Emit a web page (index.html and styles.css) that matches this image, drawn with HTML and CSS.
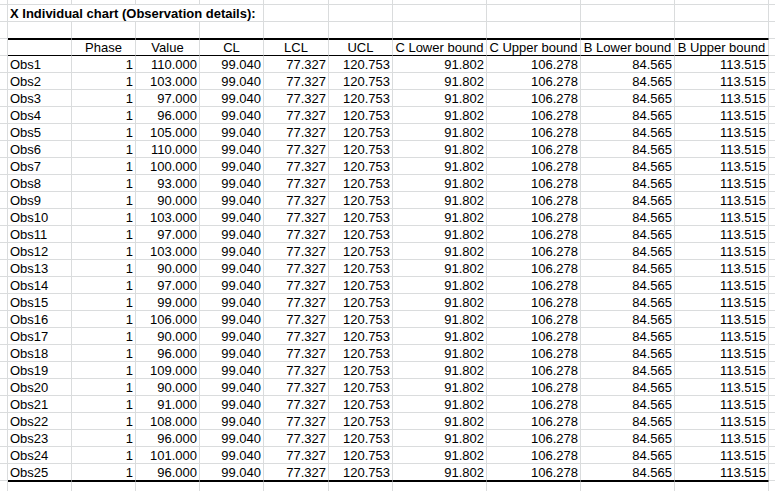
FILE: index.html
```html
<!DOCTYPE html>
<html>
<head>
<meta charset="utf-8">
<link rel="stylesheet" href="styles.css">
</head>
<body>
<div class="sheet">
  <div class="row top"><div class="c"></div><div class="c"></div><div class="c"></div><div class="c"></div><div class="c"></div><div class="c"></div><div class="c"></div><div class="c"></div><div class="c"></div><div class="c"></div><div class="c"></div><div class="c last"></div></div>
  <div class="row"><div class="c"></div><div class="c title">X Individual chart (Observation details):</div><div class="c"></div><div class="c"></div><div class="c"></div><div class="c"></div><div class="c"></div><div class="c"></div><div class="c last"></div></div>
  <div class="row gap"><div class="c"></div><div class="c k"></div><div class="c k"></div><div class="c k"></div><div class="c k"></div><div class="c k"></div><div class="c k"></div><div class="c k"></div><div class="c k"></div><div class="c k"></div><div class="c k"></div><div class="c last"></div></div>
  <div class="row head"><div class="c"></div><div class="c h"></div><div class="c h">Phase</div><div class="c h">Value</div><div class="c h">CL</div><div class="c h">LCL</div><div class="c h">UCL</div><div class="c h">C Lower bound</div><div class="c h">C Upper bound</div><div class="c h">B Lower bound</div><div class="c h">B Upper bound</div><div class="c last"></div></div>
  <div class="row"><div class="c"></div><div class="c lbl">Obs1</div><div class="c n">1</div><div class="c n">110.000</div><div class="c n">99.040</div><div class="c n">77.327</div><div class="c n">120.753</div><div class="c n">91.802</div><div class="c n">106.278</div><div class="c n">84.565</div><div class="c n">113.515</div><div class="c last"></div></div>
  <div class="row"><div class="c"></div><div class="c lbl">Obs2</div><div class="c n">1</div><div class="c n">103.000</div><div class="c n">99.040</div><div class="c n">77.327</div><div class="c n">120.753</div><div class="c n">91.802</div><div class="c n">106.278</div><div class="c n">84.565</div><div class="c n">113.515</div><div class="c last"></div></div>
  <div class="row"><div class="c"></div><div class="c lbl">Obs3</div><div class="c n">1</div><div class="c n">97.000</div><div class="c n">99.040</div><div class="c n">77.327</div><div class="c n">120.753</div><div class="c n">91.802</div><div class="c n">106.278</div><div class="c n">84.565</div><div class="c n">113.515</div><div class="c last"></div></div>
  <div class="row"><div class="c"></div><div class="c lbl">Obs4</div><div class="c n">1</div><div class="c n">96.000</div><div class="c n">99.040</div><div class="c n">77.327</div><div class="c n">120.753</div><div class="c n">91.802</div><div class="c n">106.278</div><div class="c n">84.565</div><div class="c n">113.515</div><div class="c last"></div></div>
  <div class="row"><div class="c"></div><div class="c lbl">Obs5</div><div class="c n">1</div><div class="c n">105.000</div><div class="c n">99.040</div><div class="c n">77.327</div><div class="c n">120.753</div><div class="c n">91.802</div><div class="c n">106.278</div><div class="c n">84.565</div><div class="c n">113.515</div><div class="c last"></div></div>
  <div class="row"><div class="c"></div><div class="c lbl">Obs6</div><div class="c n">1</div><div class="c n">110.000</div><div class="c n">99.040</div><div class="c n">77.327</div><div class="c n">120.753</div><div class="c n">91.802</div><div class="c n">106.278</div><div class="c n">84.565</div><div class="c n">113.515</div><div class="c last"></div></div>
  <div class="row"><div class="c"></div><div class="c lbl">Obs7</div><div class="c n">1</div><div class="c n">100.000</div><div class="c n">99.040</div><div class="c n">77.327</div><div class="c n">120.753</div><div class="c n">91.802</div><div class="c n">106.278</div><div class="c n">84.565</div><div class="c n">113.515</div><div class="c last"></div></div>
  <div class="row"><div class="c"></div><div class="c lbl">Obs8</div><div class="c n">1</div><div class="c n">93.000</div><div class="c n">99.040</div><div class="c n">77.327</div><div class="c n">120.753</div><div class="c n">91.802</div><div class="c n">106.278</div><div class="c n">84.565</div><div class="c n">113.515</div><div class="c last"></div></div>
  <div class="row"><div class="c"></div><div class="c lbl">Obs9</div><div class="c n">1</div><div class="c n">90.000</div><div class="c n">99.040</div><div class="c n">77.327</div><div class="c n">120.753</div><div class="c n">91.802</div><div class="c n">106.278</div><div class="c n">84.565</div><div class="c n">113.515</div><div class="c last"></div></div>
  <div class="row"><div class="c"></div><div class="c lbl">Obs10</div><div class="c n">1</div><div class="c n">103.000</div><div class="c n">99.040</div><div class="c n">77.327</div><div class="c n">120.753</div><div class="c n">91.802</div><div class="c n">106.278</div><div class="c n">84.565</div><div class="c n">113.515</div><div class="c last"></div></div>
  <div class="row"><div class="c"></div><div class="c lbl">Obs11</div><div class="c n">1</div><div class="c n">97.000</div><div class="c n">99.040</div><div class="c n">77.327</div><div class="c n">120.753</div><div class="c n">91.802</div><div class="c n">106.278</div><div class="c n">84.565</div><div class="c n">113.515</div><div class="c last"></div></div>
  <div class="row"><div class="c"></div><div class="c lbl">Obs12</div><div class="c n">1</div><div class="c n">103.000</div><div class="c n">99.040</div><div class="c n">77.327</div><div class="c n">120.753</div><div class="c n">91.802</div><div class="c n">106.278</div><div class="c n">84.565</div><div class="c n">113.515</div><div class="c last"></div></div>
  <div class="row"><div class="c"></div><div class="c lbl">Obs13</div><div class="c n">1</div><div class="c n">90.000</div><div class="c n">99.040</div><div class="c n">77.327</div><div class="c n">120.753</div><div class="c n">91.802</div><div class="c n">106.278</div><div class="c n">84.565</div><div class="c n">113.515</div><div class="c last"></div></div>
  <div class="row"><div class="c"></div><div class="c lbl">Obs14</div><div class="c n">1</div><div class="c n">97.000</div><div class="c n">99.040</div><div class="c n">77.327</div><div class="c n">120.753</div><div class="c n">91.802</div><div class="c n">106.278</div><div class="c n">84.565</div><div class="c n">113.515</div><div class="c last"></div></div>
  <div class="row"><div class="c"></div><div class="c lbl">Obs15</div><div class="c n">1</div><div class="c n">99.000</div><div class="c n">99.040</div><div class="c n">77.327</div><div class="c n">120.753</div><div class="c n">91.802</div><div class="c n">106.278</div><div class="c n">84.565</div><div class="c n">113.515</div><div class="c last"></div></div>
  <div class="row"><div class="c"></div><div class="c lbl">Obs16</div><div class="c n">1</div><div class="c n">106.000</div><div class="c n">99.040</div><div class="c n">77.327</div><div class="c n">120.753</div><div class="c n">91.802</div><div class="c n">106.278</div><div class="c n">84.565</div><div class="c n">113.515</div><div class="c last"></div></div>
  <div class="row"><div class="c"></div><div class="c lbl">Obs17</div><div class="c n">1</div><div class="c n">90.000</div><div class="c n">99.040</div><div class="c n">77.327</div><div class="c n">120.753</div><div class="c n">91.802</div><div class="c n">106.278</div><div class="c n">84.565</div><div class="c n">113.515</div><div class="c last"></div></div>
  <div class="row"><div class="c"></div><div class="c lbl">Obs18</div><div class="c n">1</div><div class="c n">96.000</div><div class="c n">99.040</div><div class="c n">77.327</div><div class="c n">120.753</div><div class="c n">91.802</div><div class="c n">106.278</div><div class="c n">84.565</div><div class="c n">113.515</div><div class="c last"></div></div>
  <div class="row"><div class="c"></div><div class="c lbl">Obs19</div><div class="c n">1</div><div class="c n">109.000</div><div class="c n">99.040</div><div class="c n">77.327</div><div class="c n">120.753</div><div class="c n">91.802</div><div class="c n">106.278</div><div class="c n">84.565</div><div class="c n">113.515</div><div class="c last"></div></div>
  <div class="row"><div class="c"></div><div class="c lbl">Obs20</div><div class="c n">1</div><div class="c n">90.000</div><div class="c n">99.040</div><div class="c n">77.327</div><div class="c n">120.753</div><div class="c n">91.802</div><div class="c n">106.278</div><div class="c n">84.565</div><div class="c n">113.515</div><div class="c last"></div></div>
  <div class="row"><div class="c"></div><div class="c lbl">Obs21</div><div class="c n">1</div><div class="c n">91.000</div><div class="c n">99.040</div><div class="c n">77.327</div><div class="c n">120.753</div><div class="c n">91.802</div><div class="c n">106.278</div><div class="c n">84.565</div><div class="c n">113.515</div><div class="c last"></div></div>
  <div class="row"><div class="c"></div><div class="c lbl">Obs22</div><div class="c n">1</div><div class="c n">108.000</div><div class="c n">99.040</div><div class="c n">77.327</div><div class="c n">120.753</div><div class="c n">91.802</div><div class="c n">106.278</div><div class="c n">84.565</div><div class="c n">113.515</div><div class="c last"></div></div>
  <div class="row"><div class="c"></div><div class="c lbl">Obs23</div><div class="c n">1</div><div class="c n">96.000</div><div class="c n">99.040</div><div class="c n">77.327</div><div class="c n">120.753</div><div class="c n">91.802</div><div class="c n">106.278</div><div class="c n">84.565</div><div class="c n">113.515</div><div class="c last"></div></div>
  <div class="row"><div class="c"></div><div class="c lbl">Obs24</div><div class="c n">1</div><div class="c n">101.000</div><div class="c n">99.040</div><div class="c n">77.327</div><div class="c n">120.753</div><div class="c n">91.802</div><div class="c n">106.278</div><div class="c n">84.565</div><div class="c n">113.515</div><div class="c last"></div></div>
  <div class="row end"><div class="c"></div><div class="c lbl">Obs25</div><div class="c n">1</div><div class="c n">96.000</div><div class="c n">99.040</div><div class="c n">77.327</div><div class="c n">120.753</div><div class="c n">91.802</div><div class="c n">106.278</div><div class="c n">84.565</div><div class="c n">113.515</div><div class="c last"></div></div>
  <div class="row tail"><div class="c"></div><div class="c"></div><div class="c"></div><div class="c"></div><div class="c"></div><div class="c"></div><div class="c"></div><div class="c"></div><div class="c"></div><div class="c"></div><div class="c"></div><div class="c last"></div></div>
</div>
</body>
</html>
```
FILE: styles.css
```css
html, body {
  margin: 0;
  padding: 0;
  background: #ffffff;
  overflow: hidden;
}

body {
  font-family: "Liberation Sans", Arial, sans-serif;
  font-size: 13px;
  color: #000000;
}

.sheet {
  display: flex;
  flex-direction: column;
  width: 775px;
}

.row {
  display: grid;
  grid-template-columns: 8px 64px 64px 64px 64px 65px 64px 94px 94px 94px 94px 1fr;
  height: 17px;
}

.row.top {
  height: 5px;
}

.c {
  box-sizing: border-box;
  border-right: 1px solid #dadcdd;
  border-bottom: 1px solid #dadcdd;
  padding: 2px 2px 0 2px;
  line-height: 14px;
  white-space: nowrap;
  overflow: visible;
}

.c.last {
  border-right: none;
}

.title {
  grid-column: span 4;
  font-weight: bold;
}

.gap .k {
  border-bottom-color: #000000;
}

.head .h {
  border-top: 1px solid #000000;
  border-bottom-color: #000000;
  padding-top: 1px;
  text-align: center;
}

.lbl {
  text-align: left;
}

.n {
  text-align: right;
}

.end .c:not(:first-child):not(.last) {
  border-bottom-color: #000000;
}

.tail .c:not(:first-child):not(.last) {
  border-top: 1px solid #000000;
}
```
